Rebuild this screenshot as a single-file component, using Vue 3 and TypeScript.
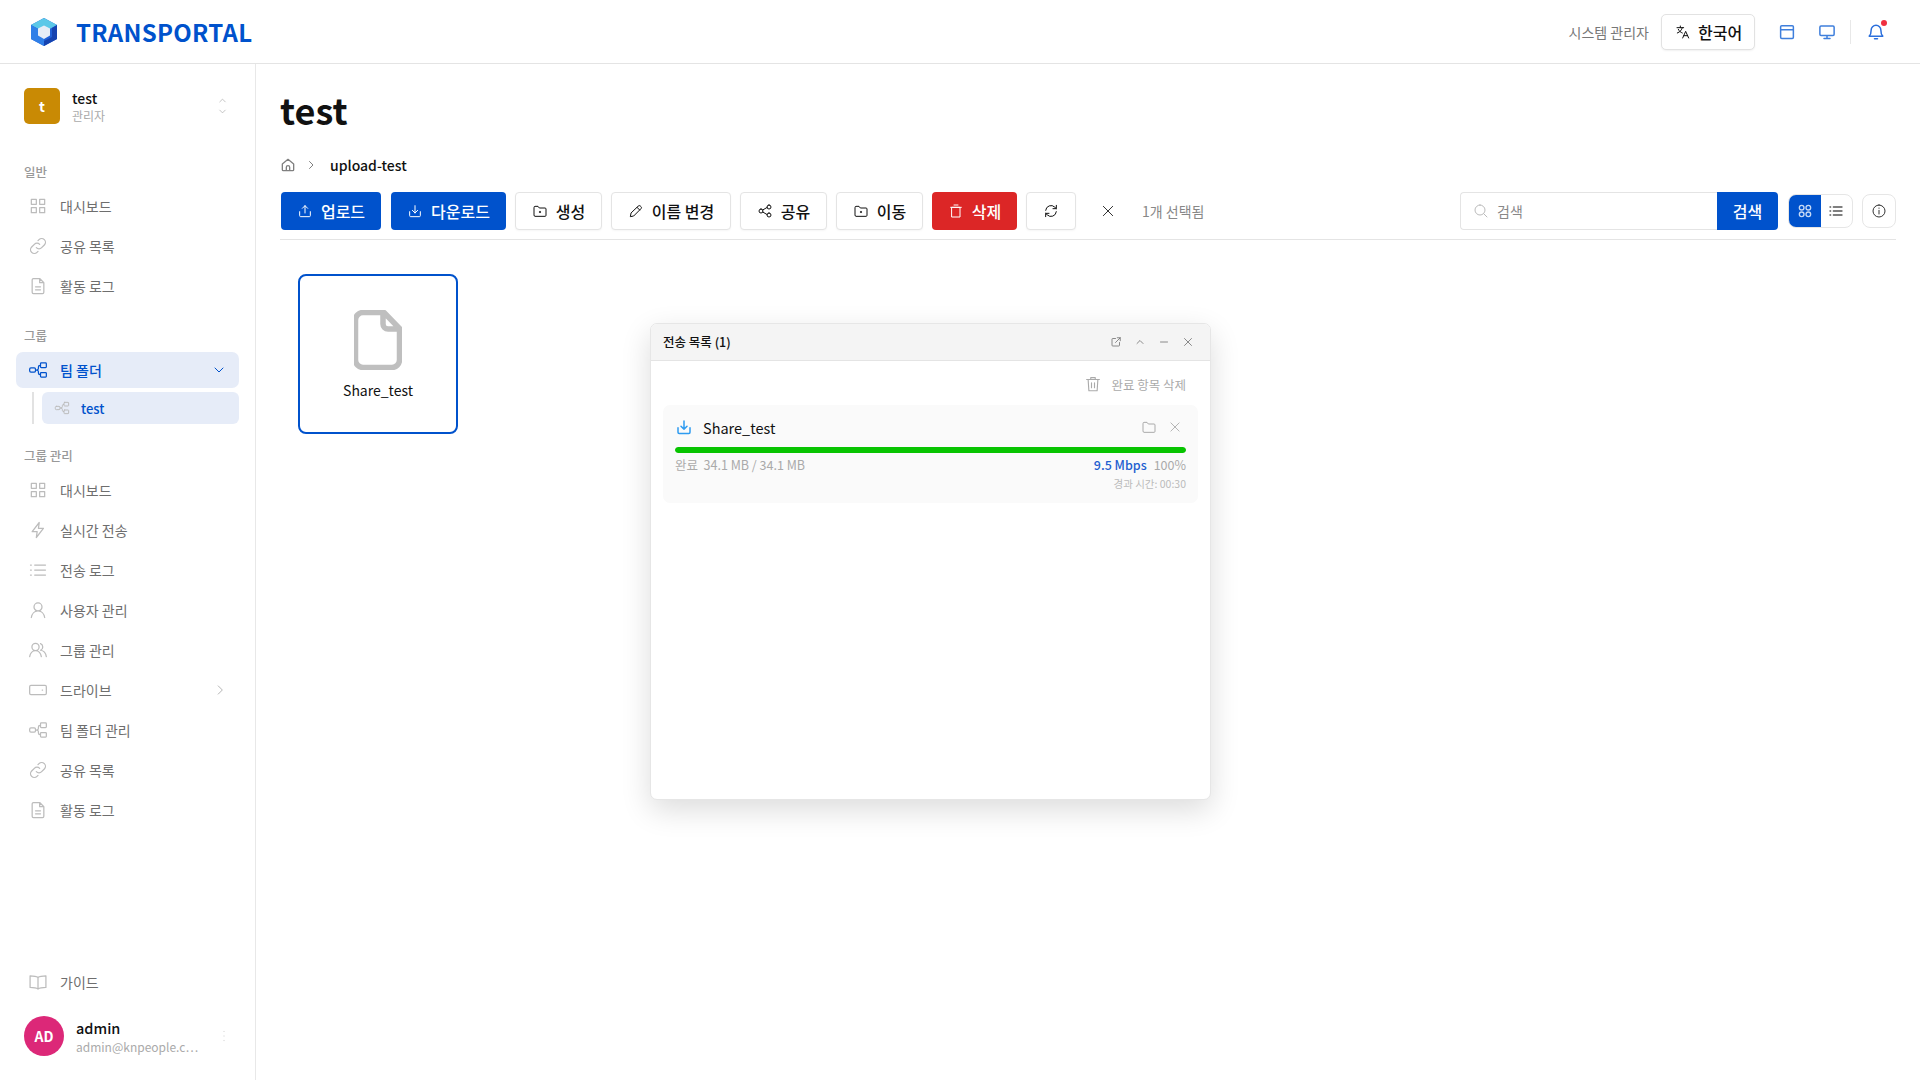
<script setup lang="ts">
const icons: Record<string, string> = {
  grid: 'M4 4h6v6H4zM14 4h6v6h-6zM4 14h6v6H4zM14 14h6v6h-6z',
  link: 'M10 14a4.500 4.500 0 0 0 6.400 0l3.200-3.200a4.500 4.500 0 0 0-6.400-6.400L12 5.600M14 10a4.500 4.500 0 0 0-6.400 0l-3.200 3.200a4.500 4.500 0 0 0 6.400 6.400l1.200-1.200',
  doc: 'M6.500 3h7.500l5 5v11.500a1.500 1.500 0 0 1-1.500 1.500h-11A1.500 1.500 0 0 1 5 19.500v-15A1.500 1.500 0 0 1 6.500 3zM14 3v5h5M9 13h6M9 16.500h6',
  team: 'M3.500 9.500h4a1.500 1.500 0 0 1 1.500 1.500v2a1.500 1.500 0 0 1-1.500 1.500h-4A1.500 1.500 0 0 1 2 13v-2a1.500 1.500 0 0 1 1.500-1.500zM9 12h1.500a2 2 0 0 0 2-2V8.500a2 2 0 0 1 2-2M10.500 12a2 2 0 0 1 2 2v1.500a2 2 0 0 0 2 2M16 3.500h5a1 1 0 0 1 1 1v3.500a1 1 0 0 1-1 1h-5a1 1 0 0 1-1-1V4.500a1 1 0 0 1 1-1zM16 15h5a1 1 0 0 1 1 1v3.500a1 1 0 0 1-1 1h-5a1 1 0 0 1-1-1V16a1 1 0 0 1 1-1z',
  bolt: 'M13.500 3 5 14h6l-1 7 8.500-11h-6z',
  list: 'M8 6h13M8 12h13M8 18h13M3 6h1M3 12h1M3 18h1',
  user: 'M12 3.500a4.800 4.800 0 1 1 0 9.600 4.800 4.800 0 0 1 0-9.600zM4 21c.6-4.400 3.800-7.900 8-7.900s7.400 3.500 8 7.900',
  users: 'M9 4a4.300 4.300 0 1 1 0 8.600A4.300 4.300 0 0 1 9 4zM2 20c.5-4 3.300-7.400 7-7.400s6.500 3.400 7 7.400M15 4.300a4.300 4.300 0 0 1 0 8c3.600.4 6.400 3.600 7 7.700',
  drive: 'M3.500 6.500h17a1.500 1.500 0 0 1 1.500 1.500v8a1.500 1.500 0 0 1-1.500 1.500h-17A1.500 1.500 0 0 1 2 16V8a1.500 1.500 0 0 1 1.500-1.500zM17 12h.5',
  book: 'M12 6.500C10 5 6.500 4.500 2.500 4.500v14c4 0 7.500.5 9.500 2 2-1.500 5.500-2 9.500-2v-14c-4 0-7.500.5-9.500 2zM12 6.500v14',
  upload: 'M4 13v6a1.500 1.500 0 0 0 1.500 1.500h13A1.500 1.500 0 0 0 20 19v-6M12 15V4M8 8l4-4 4 4',
  download: 'M4 13v6a1.500 1.500 0 0 0 1.500 1.500h13A1.500 1.500 0 0 0 20 19v-6M12 4v11M8 11l4 4 4-4',
  folderDot: 'M3 6.500A1.500 1.500 0 0 1 4.500 5H9l2 2.500h8.500A1.500 1.500 0 0 1 21 9v9.500a1.500 1.500 0 0 1-1.500 1.500h-15A1.500 1.500 0 0 1 3 18.500zM11 13.500h2M12 12.500v2',
  pencil: 'M15.500 4.500a2.100 2.100 0 0 1 3 0l1 1a2.100 2.100 0 0 1 0 3L8.500 19.500 3.500 20.500l1-5zM13.500 6.500l4 4',
  share: 'M18 3a3 3 0 1 1 0 6 3 3 0 0 1 0-6zM6 9a3 3 0 1 1 0 6 3 3 0 0 1 0-6zM18 15a3 3 0 1 1 0 6 3 3 0 0 1 0-6zM8.600 10.500l6.800-4M8.600 13.500l6.800 4',
  trash: 'M4 6.500h16M9 3h6M6 6.500h12V21H6z',
  trashLines: 'M3.500 6h17M9 6V3.500h6V6M5.500 6l1 15h11l1-15M10 10.500v6.500M14 10.500v6.500',
  refresh: 'M4 11a8 8 0 0 1 13.700-4.700L20 8.500M20 3.500v5h-5M20 13a8 8 0 0 1-13.700 4.700L4 15.500M4 20.500v-5h5',
  close: 'M5 5l14 14M19 5 5 19',
  search: 'M10.500 3a7.500 7.500 0 1 1 0 15 7.500 7.500 0 0 1 0-15zM16 16l5 5',
  gridRound: 'M7 3.500a3.500 3.500 0 1 1 0 7 3.500 3.500 0 0 1 0-7zM17 3.500a3.500 3.500 0 1 1 0 7 3.500 3.500 0 0 1 0-7zM7 13.500a3.500 3.500 0 1 1 0 7 3.500 3.500 0 0 1 0-7zM17 13.500a3.500 3.500 0 1 1 0 7 3.500 3.500 0 0 1 0-7z',
  info: 'M12 3a9 9 0 1 1 0 18 9 9 0 0 1 0-18zM12 11v5.500M12 7.500v.5',
  home: 'M3.500 10.500 12 3.500l8.500 7V19a1.500 1.500 0 0 1-1.500 1.500H5A1.500 1.500 0 0 1 3.500 19zM9.500 20.500v-5a2.500 2.500 0 0 1 5 0v5',
  layout: 'M5 3.500h14A1.500 1.500 0 0 1 20.500 5v14a1.500 1.500 0 0 1-1.500 1.500H5A1.500 1.500 0 0 1 3.500 19V5A1.500 1.500 0 0 1 5 3.500zM3.500 9h17',
  monitor: 'M4 4h16a1.500 1.500 0 0 1 1.500 1.500V15a1.500 1.500 0 0 1-1.500 1.500H4A1.500 1.500 0 0 1 2.500 15V5.500A1.500 1.500 0 0 1 4 4zM12 16.500V20M8 20.500h8',
  bell: 'M12 3a6.500 6.500 0 0 1 6.500 6.500c0 5 2 7.500 2.500 8H3c.5-.5 2.500-3 2.500-8A6.500 6.500 0 0 1 12 3zM10 21h4',
  translate: 'M3 5.500h10M8 3v2.500M11 5.500c-.8 3.500-3.500 6.500-7.500 8M5 8c1 2.500 3.500 4.500 6 5.500M11.500 21l4.500-10 4.500 10M13 17.500h6',
  external: 'M11 5H5.500A1.500 1.500 0 0 0 4 6.500v12A1.500 1.500 0 0 0 5.500 20h12a1.500 1.500 0 0 0 1.500-1.500V13M14.500 3.500H20.500V9.500M20.500 3.500 11 13',
  up: 'M6 15l6-6 6 6',
  down: 'M6 9l6 6 6-6',
  right: 'M9 5l7 7-7 7',
  minus: 'M5 12h14',
  folder: 'M3 6.500A1.500 1.500 0 0 1 4.500 5H9l2 2.500h8.500A1.500 1.500 0 0 1 21 9v9.500a1.500 1.500 0 0 1-1.500 1.500h-15A1.500 1.500 0 0 1 3 18.500z',
  dots: 'M12 4v.5M12 11.800v.5M12 19.500v.5',
}

type NavItem = { label: string; icon: string; arrow?: boolean }

const generalNav: NavItem[] = [
  { label: '대시보드', icon: 'grid' },
  { label: '공유 목록', icon: 'link' },
  { label: '활동 로그', icon: 'doc' },
]
const adminNav: NavItem[] = [
  { label: '대시보드', icon: 'grid' },
  { label: '실시간 전송', icon: 'bolt' },
  { label: '전송 로그', icon: 'list' },
  { label: '사용자 관리', icon: 'user' },
  { label: '그룹 관리', icon: 'users' },
  { label: '드라이브', icon: 'drive', arrow: true },
  { label: '팀 폴더 관리', icon: 'team' },
  { label: '공유 목록', icon: 'link' },
  { label: '활동 로그', icon: 'doc' },
]
const outlineActions = [
  { label: '생성', icon: 'folderDot', width: 87 },
  { label: '이름 변경', icon: 'pencil', width: 120 },
  { label: '공유', icon: 'share', width: 87 },
  { label: '이동', icon: 'folderDot', width: 87 },
]
const progress = 100
</script>

<template>
  <div class="page">
    <header class="topbar">
      <div class="brand">
        <svg class="logo" viewBox="0 0 28 30">
          <path d="M14 1 27 8v14l-13 7L1 22V8z" fill="#1f5fd6" />
          <path d="M14 1 27 8l-13 7L1 8z" fill="#5cc8e8" />
          <path d="M14 29V15L1 8v14z" fill="#2f7fe8" />
          <path d="M14 8.500 20 11.500v7l-6 3.500-6-3.500v-7z" fill="#e6edf7" />
          <path d="M14 29l13-7V8l-5 3v9l-8 4z" fill="#1543b0" />
        </svg>
        <span class="brand-name">TRANSPORTAL</span>
      </div>
      <div class="top-right">
        <span class="role">시스템 관리자</span>
        <button class="lang">
          <svg class="ic ic-16" viewBox="0 0 24 24"><path :d="icons.translate" /></svg>
          한국어
        </button>
        <svg class="ic ic-18 top-icon first" viewBox="0 0 24 24"><path :d="icons.layout" /></svg>
        <svg class="ic ic-18 top-icon" viewBox="0 0 24 24"><path :d="icons.monitor" /></svg>
        <span class="top-divider"></span>
        <span class="bell">
          <svg class="ic ic-18 top-icon" viewBox="0 0 24 24"><path :d="icons.bell" /></svg>
          <i class="bell-dot"></i>
        </span>
      </div>
    </header>

    <div class="body">
      <aside class="sidebar">
        <div>
          <div class="switcher">
            <div class="team-avatar">t</div>
            <div class="team-text">
              <strong>test</strong>
              <span>관리자</span>
            </div>
            <div class="updown">
              <svg class="ic ic-10" viewBox="0 0 24 24"><path :d="icons.up" /></svg>
              <svg class="ic ic-10" viewBox="0 0 24 24"><path :d="icons.down" /></svg>
            </div>
          </div>

          <div class="section-label first-label">일반</div>
          <a v-for="item in generalNav" :key="item.label" class="nav-row">
            <svg class="ic ic-20" viewBox="0 0 24 24"><path :d="icons[item.icon]" /></svg>
            <span>{{ item.label }}</span>
          </a>

          <div class="section-label">그룹</div>
          <a class="nav-row active">
            <svg class="ic ic-20" viewBox="0 0 24 24"><path :d="icons.team" /></svg>
            <span>팀 폴더</span>
            <svg class="ic ic-16 chevron" viewBox="0 0 24 24"><path :d="icons.down" /></svg>
          </a>
          <div class="sub-wrap">
            <a class="sub-row">
              <svg class="ic ic-16" viewBox="0 0 24 24"><path :d="icons.team" /></svg>
              <span>test</span>
            </a>
          </div>

          <div class="section-label admin-label">그룹 관리</div>
          <a v-for="item in adminNav" :key="item.label + item.icon" class="nav-row">
            <svg class="ic ic-20" viewBox="0 0 24 24"><path :d="icons[item.icon]" /></svg>
            <span>{{ item.label }}</span>
            <svg v-if="item.arrow" class="ic ic-14 chevron" viewBox="0 0 24 24"><path :d="icons.right" /></svg>
          </a>
        </div>

        <div class="side-bottom">
          <a class="nav-row">
            <svg class="ic ic-20" viewBox="0 0 24 24"><path :d="icons.book" /></svg>
            <span>가이드</span>
          </a>
          <div class="account">
            <div class="account-avatar">AD</div>
            <div class="account-text">
              <strong>admin</strong>
              <span>admin@knpeople.c⋯</span>
            </div>
            <svg class="ic ic-14 account-more" viewBox="0 0 24 24"><path :d="icons.dots" /></svg>
          </div>
        </div>
      </aside>

      <main class="main">
        <h1>test</h1>
        <nav class="crumbs">
          <svg class="ic ic-16" viewBox="0 0 24 24"><path :d="icons.home" /></svg>
          <svg class="ic ic-12" viewBox="0 0 24 24"><path :d="icons.right" /></svg>
          <span>upload-test</span>
        </nav>

        <div class="toolbar">
          <button class="btn primary up-btn">
            <svg class="ic ic-16" viewBox="0 0 24 24"><path :d="icons.upload" /></svg>업로드
          </button>
          <button class="btn primary down-btn">
            <svg class="ic ic-16" viewBox="0 0 24 24"><path :d="icons.download" /></svg>다운로드
          </button>
          <button v-for="a in outlineActions" :key="a.label" class="btn outline" :style="{ width: a.width + 'px' }">
            <svg class="ic ic-16" viewBox="0 0 24 24"><path :d="icons[a.icon]" /></svg>{{ a.label }}
          </button>
          <button class="btn danger">
            <svg class="ic ic-16" viewBox="0 0 24 24"><path :d="icons.trash" /></svg>삭제
          </button>
          <button class="btn outline refresh">
            <svg class="ic ic-16" viewBox="0 0 24 24"><path :d="icons.refresh" /></svg>
          </button>
          <svg class="ic ic-16 clear" viewBox="0 0 24 24"><path :d="icons.close" /></svg>
          <span class="selected-count">1개 선택됨</span>

          <div class="toolbar-right">
            <div class="search">
              <div class="search-box">
                <svg class="ic ic-16" viewBox="0 0 24 24"><path :d="icons.search" /></svg>
                <span>검색</span>
              </div>
              <button class="search-btn">검색</button>
            </div>
            <div class="view-toggle">
              <span class="view on"><svg class="ic ic-16" viewBox="0 0 24 24"><path :d="icons.gridRound" /></svg></span>
              <span class="view"><svg class="ic ic-16" viewBox="0 0 24 24"><path :d="icons.list" /></svg></span>
            </div>
            <span class="info"><svg class="ic ic-16" viewBox="0 0 24 24"><path :d="icons.info" /></svg></span>
          </div>
        </div>

        <div class="files">
          <div class="file-card">
            <svg class="file-icon" viewBox="0 0 48 60">
              <path d="M9 2.500h21l15.500 16V50a7.500 7.500 0 0 1-7.500 7.500H9A7.500 7.500 0 0 1 1.500 50V10A7.500 7.500 0 0 1 9 2.500zM29 3v11a5 5 0 0 0 5 5h11" />
            </svg>
            <span>Share_test</span>
          </div>
        </div>
      </main>
    </div>

    <section class="transfer">
      <div class="transfer-head">
        <strong>전송 목록 (1)</strong>
        <div class="head-icons">
          <svg class="ic ic-12" viewBox="0 0 24 24"><path :d="icons.external" /></svg>
          <svg class="ic ic-12" viewBox="0 0 24 24"><path :d="icons.up" /></svg>
          <svg class="ic ic-12" viewBox="0 0 24 24"><path :d="icons.minus" /></svg>
          <svg class="ic ic-12" viewBox="0 0 24 24"><path :d="icons.close" /></svg>
        </div>
      </div>
      <div class="transfer-body">
        <div class="clear-done">
          <svg class="ic ic-18" viewBox="0 0 24 24"><path :d="icons.trashLines" /></svg>
          <span>완료 항목 삭제</span>
        </div>
        <div class="transfer-item">
          <div class="item-top">
            <svg class="ic ic-16 item-dl" viewBox="0 0 24 24"><path :d="icons.download" /></svg>
            <span class="item-name">Share_test</span>
            <svg class="ic ic-16 item-act" viewBox="0 0 24 24"><path :d="icons.folder" /></svg>
            <svg class="ic ic-14 item-act" viewBox="0 0 24 24"><path :d="icons.close" /></svg>
          </div>
          <div class="bar"><div class="bar-fill" :style="{ width: progress + '%' }"></div></div>
          <div class="item-meta">
            <span>완료 &nbsp;34.1 MB / 34.1 MB</span>
            <span class="item-right"><b>9.5 Mbps</b>{{ progress }}%</span>
          </div>
          <div class="item-time">경과 시간: 00:30</div>
        </div>
      </div>
    </section>
  </div>
</template>

<style>
body {
  margin: 0;
  background: #fff;
}
</style>

<style scoped>
.page {
  position: relative;
  height: 1080px;
  overflow: hidden;
  font-family: "Noto Sans CJK KR", "Noto Sans", sans-serif;
  color: #111;
  background: #fff;
}

.ic {
  flex: none;
  fill: none;
  stroke: currentColor;
  stroke-width: 1.5;
  stroke-linecap: round;
  stroke-linejoin: round;
}
.ic-10 { width: 11px; height: 11px; }
.ic-12 { width: 12px; height: 12px; }
.ic-14 { width: 14px; height: 14px; }
.ic-16 { width: 16px; height: 16px; }
.ic-18 { width: 18px; height: 18px; }
.ic-20 { width: 20px; height: 20px; }

/* top bar */
.topbar {
  height: 63px;
  display: flex;
  align-items: center;
  justify-content: space-between;
  padding: 0 35px 0 30px;
  border-bottom: 1px solid #e4e4e4;
}
.brand {
  display: flex;
  align-items: center;
  gap: 18px;
}
.logo {
  width: 28px;
  height: 30px;
}
.brand-name {
  font-size: 24px;
  font-weight: 700;
  letter-spacing: 0.3px;
  color: #0052cc;
  line-height: 1;
}
.top-right {
  display: flex;
  align-items: center;
}
.role {
  font-size: 14px;
  color: #777;
  margin-right: 12px;
}
.lang {
  display: flex;
  align-items: center;
  gap: 7px;
  height: 36px;
  width: 94px;
  padding: 0 0 0 13px;
  background: #fff;
  border: 1px solid #e2e2e2;
  border-radius: 5px;
  box-shadow: 0 1px 2px rgba(0, 0, 0, 0.06);
  font: 500 16px "Noto Sans CJK KR", sans-serif;
  color: #111;
}
.top-icon {
  color: #3f7fdc;
  margin-left: 22px;
  stroke-width: 2;
}
.top-icon.first {
  margin-left: 23px;
}
.top-divider {
  width: 1px;
  height: 24px;
  background: #e8e8e8;
  margin: 0 16px 0 14px;
}
.bell {
  position: relative;
  display: flex;
}
.bell .top-icon {
  margin-left: 0;
  color: #2b6fdc;
}
.bell-dot {
  position: absolute;
  top: -3px;
  right: -2px;
  width: 6px;
  height: 6px;
  border-radius: 50%;
  background: #f03040;
}

.body {
  display: flex;
  height: 1016px;
}

/* sidebar */
.sidebar {
  width: 256px;
  box-sizing: border-box;
  flex: none;
  border-right: 1px solid #e8e8e8;
  padding: 0 16px;
  display: flex;
  flex-direction: column;
  justify-content: space-between;
}
.switcher {
  display: flex;
  align-items: center;
  margin: 24px 0 0 8px;
  height: 36px;
}
.team-avatar {
  width: 36px;
  height: 36px;
  border-radius: 5px;
  background: #c98a04;
  color: #fff;
  font-weight: 700;
  font-size: 14px;
  display: flex;
  align-items: center;
  justify-content: center;
}
.team-text {
  margin: 2px 0 0 12px;
  flex: 1;
  display: flex;
  flex-direction: column;
  line-height: 18px;
}
.team-text strong {
  font-size: 14px;
  font-weight: 500;
}
.team-text span {
  font-size: 12px;
  color: #aaa;
}
.updown {
  display: flex;
  flex-direction: column;
  color: #aaa;
  margin-right: 11px;
}
.section-label {
  font-size: 12.5px;
  font-weight: 500;
  color: #999;
  height: 20px;
  line-height: 20px;
  margin: 20px 0 0 8px;
}
.section-label.first-label {
  margin-top: 38px;
}
.section-label.admin-label {
  margin-top: 22px;
}
.nav-row {
  display: flex;
  align-items: center;
  gap: 12px;
  height: 40px;
  padding: 0 12px;
  font-size: 14px;
  color: #6e6e6e;
}
.nav-row .ic {
  color: #bcbcbc;
}
.nav-row .chevron {
  margin-left: auto;
  color: #aaa;
}
.nav-row.active {
  height: 36px;
  margin-top: 6px;
  background: #e6ecf8;
  border-radius: 7px;
  color: #0052cc;
  font-size: 14px;
  font-weight: 500;
}
.nav-row.active .ic {
  color: #0052cc;
}
.sub-wrap {
  margin: 4px 0 0 16px;
  border-left: 2px solid #e2e2e2;
  padding-left: 8px;
}
.sub-row {
  display: flex;
  align-items: center;
  gap: 11px;
  height: 32px;
  padding: 0 12px;
  background: #e6ecf8;
  border-radius: 6px;
  font-size: 13px;
  font-weight: 500;
  color: #0052cc;
}
.sub-row .ic {
  color: #bcbcbc;
}
.section-label + .nav-row:not(.active) {
  margin-top: 4px;
}
.side-bottom {
  padding-bottom: 24px;
}
.account {
  display: flex;
  align-items: center;
  height: 40px;
  margin: 14px 0 0 8px;
}
.account-avatar {
  width: 40px;
  height: 40px;
  border-radius: 50%;
  background: #dc2878;
  color: #fff;
  font-size: 14px;
  font-weight: 700;
  display: flex;
  align-items: center;
  justify-content: center;
}
.account-text {
  margin: 1px 0 0 12px;
  flex: 1;
  display: flex;
  flex-direction: column;
  line-height: 19px;
}
.account-text strong {
  font-size: 14.5px;
  font-weight: 500;
}
.account-text span {
  font-size: 12px;
  color: #aaa;
}
.account-more {
  color: #ccc;
  margin-right: 8px;
}

/* main */
.main {
  flex: 1;
  padding: 0 24px;
  min-width: 0;
}
h1 {
  margin: 19px 0 0;
  font-size: 36px;
  font-weight: 700;
  line-height: 52px;
}
.crumbs {
  display: flex;
  align-items: center;
  gap: 9px;
  margin-top: 18px;
  height: 24px;
  font-size: 14px;
  font-weight: 500;
}
.crumbs .ic {
  color: #808080;
  stroke-width: 2;
}
.crumbs span {
  margin-left: 4px;
}
.toolbar {
  display: flex;
  align-items: center;
  gap: 9px;
  height: 38px;
  margin-top: 15px;
  padding-bottom: 9px;
  border-bottom: 1px solid #e4e4e4;
}
.btn {
  display: flex;
  align-items: center;
  justify-content: center;
  gap: 8px;
  height: 38px;
  box-sizing: border-box;
  padding: 0;
  border-radius: 4px;
  font: 500 16px "Noto Sans CJK KR", sans-serif;
}
.primary {
  background: #0052cc;
  border: 0;
  color: #fff;
}
.up-btn { width: 100px; margin: 0 1px; }
.down-btn { width: 115px; }
.outline {
  background: #fff;
  border: 1px solid #e4e4e4;
  color: #111;
  box-shadow: 0 1px 2px rgba(0, 0, 0, 0.04);
}
.danger {
  width: 85px;
  background: #dc2626;
  border: 0;
  color: #fff;
}
.refresh {
  width: 50px;
}
.clear {
  margin-left: 15px;
  color: #333;
}
.selected-count {
  margin-left: 17px;
  font-size: 14px;
  color: #888;
}
.toolbar-right {
  margin-left: auto;
  display: flex;
  align-items: center;
  gap: 9px;
}
.search {
  display: flex;
  height: 38px;
  margin-right: 1px;
}
.search-box {
  width: 257px;
  box-sizing: border-box;
  display: flex;
  align-items: center;
  gap: 8px;
  padding-left: 12px;
  border: 1px solid #e4e4e4;
  border-right: 0;
  border-radius: 4px 0 0 4px;
  font-size: 14px;
  color: #888;
}
.search-box .ic {
  color: #bbb;
}
.search-btn {
  width: 61px;
  height: 38px;
  border: 0;
  background: #0052cc;
  color: #fff;
  border-radius: 0 4px 4px 0;
  font: 500 16px "Noto Sans CJK KR", sans-serif;
}
.view-toggle {
  display: flex;
  width: 65px;
  height: 34px;
  box-sizing: border-box;
  border: 1px solid #e6e6e6;
  border-radius: 8px;
  overflow: hidden;
}
.view {
  flex: 1;
  display: flex;
  align-items: center;
  justify-content: center;
  color: #555;
}
.view .ic {
  stroke-width: 2;
}
.view.on {
  background: #0052cc;
  color: #c6d9f5;
}
.info {
  width: 34px;
  height: 34px;
  box-sizing: border-box;
  display: flex;
  align-items: center;
  justify-content: center;
  border: 1px solid #e6e6e6;
  border-radius: 8px;
  color: #333;
}
.files {
  padding: 34px 0 0 18px;
}
.file-card {
  width: 160px;
  height: 160px;
  box-sizing: border-box;
  border: 2px solid #0052cc;
  border-radius: 8px;
  display: flex;
  flex-direction: column;
  align-items: center;
  padding-top: 34px;
  font-size: 14px;
}
.file-icon {
  width: 48px;
  height: 60px;
  fill: none;
  stroke: #bfbfbf;
  stroke-width: 5.500;
  stroke-linejoin: round;
  margin-bottom: 10px;
}

/* floating transfer window */
.transfer {
  position: absolute;
  left: 650px;
  top: 323px;
  width: 561px;
  height: 477px;
  box-sizing: border-box;
  background: #fff;
  border: 1px solid #e6e6e6;
  border-radius: 7px;
  box-shadow: 0 10px 30px rgba(0, 0, 0, 0.14);
  overflow: hidden;
}
.transfer-head {
  height: 37px;
  box-sizing: border-box;
  display: flex;
  align-items: center;
  justify-content: space-between;
  padding: 0 16px 0 12px;
  background: #f4f4f4;
  border-bottom: 1px solid #e4e4e4;
}
.transfer-head strong {
  font-size: 12.500px;
  font-weight: 500;
  margin-top: -2px;
}
.head-icons {
  display: flex;
  gap: 12px;
  color: #666;
}
.transfer-body {
  padding: 0 12px;
}
.clear-done {
  display: flex;
  align-items: center;
  justify-content: flex-end;
  gap: 9px;
  height: 42px;
  padding: 2px 12px 0 0;
  font-size: 12.500px;
  color: #aaa;
}
.transfer-item {
  height: 98px;
  box-sizing: border-box;
  padding: 10px 12px 0 12px;
  background: #fafafa;
  border-radius: 7px;
}
.item-top {
  display: flex;
  align-items: center;
  height: 24px;
}
.item-dl {
  color: #2e9bf0;
  width: 18px;
  height: 18px;
  stroke-width: 2;
}
.item-name {
  flex: 1;
  margin-left: 10px;
  font-size: 14.500px;
}
.item-act {
  color: #aaa;
  margin-left: 11px;
}
.item-act:last-child {
  margin-right: 4px;
}
.bar {
  height: 6px;
  margin-top: 8px;
  background: #eee;
  border-radius: 3px;
  overflow: hidden;
}
.bar-fill {
  height: 100%;
  background: #07c400;
  border-radius: 3px;
}
.item-meta {
  display: flex;
  justify-content: space-between;
  font-size: 12.500px;
  line-height: 18px;
  margin-top: 3px;
  color: #aaa;
}
.item-right b {
  font-weight: 500;
  color: #1f5fd0;
  margin-right: 7px;
}
.item-time {
  text-align: right;
  font-size: 10.500px;
  line-height: 14px;
  margin-top: 3px;
  color: #bbb;
}
</style>
